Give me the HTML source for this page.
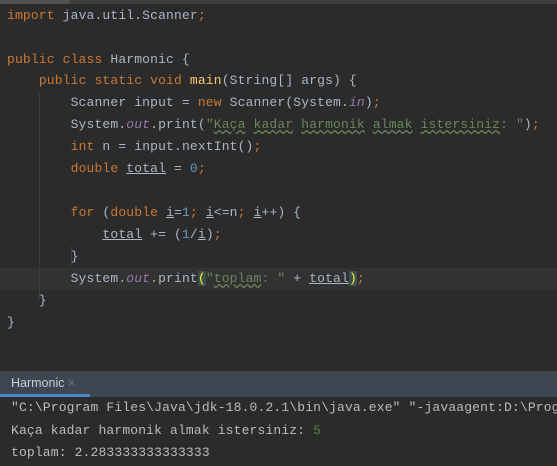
<html><head><style>
body{margin:0;width:557px;height:466px;overflow:hidden;background:#2b2b2b;font-family:"Liberation Mono",monospace;font-size:13px;letter-spacing:0.15px}
#top{position:absolute;top:0;left:0;width:557px;height:4px;background:#3c3f41}
#top i{position:absolute;left:0;top:0;width:70px;height:4px;background:#4e5254}
.ln{position:absolute;left:7px;height:22px;line-height:22px;color:#a9b7c6;white-space:pre}
.k{color:#cc7832}.s{color:#6a8759}.m{color:#ffc66d}.o{color:#9876aa;font-style:italic}.n{color:#6897bb}
.u{text-decoration:underline}.w{text-decoration:underline wavy #6a8759}
.g{position:absolute;width:1px;background:#3b3b3b}
#cur{position:absolute;left:0;top:268px;width:557px;height:22px;background:#323232}
#hdr{position:absolute;top:371px;left:0;width:557px;height:25px;background:#3d4752;border-top:1px solid #4a4a4a}
#hdr span{position:absolute;left:11px;top:4px;font-family:"Liberation Sans",sans-serif;font-size:12.5px;color:#c9cdd1;letter-spacing:0}
#hdr b{position:absolute;left:0;bottom:0;width:90px;height:3px;background:#4a88c7}
.c{position:absolute;left:11px;color:#bbbbbb;white-space:pre;line-height:22px}
</style></head><body>
<div id="top"><i></i></div>
<div id="cur"></div>
<div class="g" style="left:39px;top:92px;height:208px"></div>
<div class="g" style="left:71px;top:246px;height:20px"></div>
<div class="ln" style="top:5px"><span class="k">import</span> java.util.Scanner<span class="k">;</span></div>
<div class="ln" style="top:49px"><span class="k">public class</span> Harmonic {</div>
<div class="ln" style="top:70px">    <span class="k">public static void</span> <span class="m">main</span>(String[] args) {</div>
<div class="ln" style="top:92px">        Scanner input = <span class="k">new</span> Scanner(System.<span class="o">in</span>)<span class="k">;</span></div>
<div class="ln" style="top:114px">        System.<span class="o">out</span>.print(<span class="s">"<span class="w">Kaça</span> <span class="w">kadar</span> <span class="w">harmonik</span> <span class="w">almak</span> <span class="w">istersiniz</span>: "</span>)<span class="k">;</span></div>
<div class="ln" style="top:136px">        <span class="k">int</span> n = input.nextInt()<span class="k">;</span></div>
<div class="ln" style="top:158px">        <span class="k">double</span> <span class="u">total</span> = <span class="n">0</span><span class="k">;</span></div>
<div class="ln" style="top:202px">        <span class="k">for</span> (<span class="k">double</span> <span class="u">i</span>=<span class="n">1</span><span class="k">;</span> <span class="u">i</span>&lt;=n<span class="k">;</span> <span class="u">i</span>++) {</div>
<div class="ln" style="top:224px">            <span class="u">total</span> += (<span class="n">1</span>/<span class="u">i</span>)<span class="k">;</span></div>
<div class="ln" style="top:246px">        }</div>
<div class="ln" style="top:268px">        System.<span class="o">out</span>.print<span style="background:#3b514d;color:#ffef28">(</span><span class="s">"<span class="w">toplam</span>: "</span> + <span class="u">total</span><span style="background:#3b514d;color:#ffef28">)</span><span class="k">;</span></div>
<div class="ln" style="top:290px">    }</div>
<div class="ln" style="top:312px">}</div>
<div id="hdr"><span>Harmonic <span style="position:static;color:#6e7378">×</span></span><b></b></div>
<div class="c" style="top:397px">"C:\Program Files\Java\jdk-18.0.2.1\bin\java.exe" "-javaagent:D:\Program</div>
<div class="c" style="top:420px">Kaça kadar harmonik almak istersiniz: <span style="color:#4e8a3e">5</span></div>
<div class="c" style="top:442px">toplam: 2.283333333333333</div>
</body></html>
